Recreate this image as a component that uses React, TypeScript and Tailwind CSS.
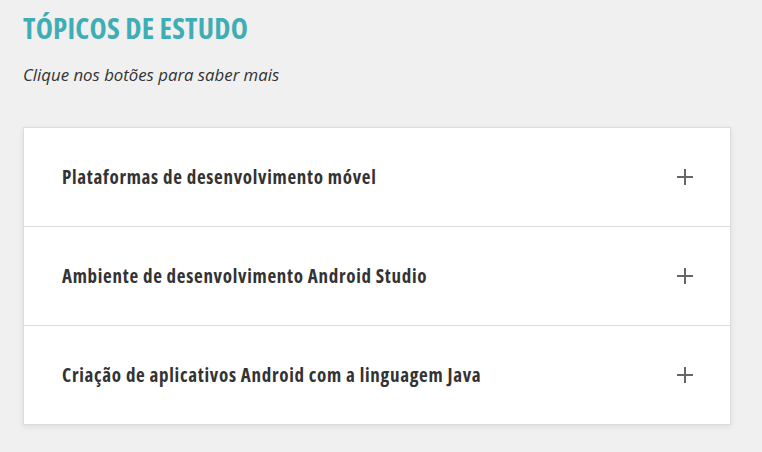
const topics = [
  'Plataformas de desenvolvimento móvel',
  'Ambiente de desenvolvimento Android Studio',
  'Criação de aplicativos Android com a linguagem Java',
];

function PlusIcon() {
  return (
    <svg width="18" height="18" viewBox="0 0 18 18" fill="none" stroke="currentColor" strokeWidth="2" className="text-[#666]">
      <line x1="9" y1="1" x2="9" y2="17" />
      <line x1="1" y1="9" x2="17" y2="9" />
    </svg>
  );
}

export default function App() {
  return (
    <div className="min-h-[452px] bg-[#f0f0f0] px-[23px] pt-[10px] pb-[26px] font-['Open_Sans',sans-serif]">
      <h1 className="text-[29px] leading-[36px] font-bold font-stretch-[75%] text-[#3fadb5] tracking-[0.2px]">
        TÓPICOS DE ESTUDO
      </h1>
      <p className="mt-[18px] text-[16.8px] leading-[22px] italic text-[#333]">
        Clique nos botões para saber mais
      </p>
      <div className="mt-[41px] w-[708px] bg-white border border-[#dcdcdc] shadow-[0_2px_6px_rgba(0,0,0,0.08)]">
        {topics.map((t, i) => (
          <div
            key={t}
            className={`flex items-center justify-between pl-[38px] pr-[36px] ${i > 0 ? 'h-[99px] border-t border-[#dcdcdc]' : 'h-[98px]'}`}
          >
            <span className="text-[19px] font-bold font-stretch-[75%] tracking-[0.7px] text-[#333]">{t}</span>
            <PlusIcon />
          </div>
        ))}
      </div>
    </div>
  );
}
